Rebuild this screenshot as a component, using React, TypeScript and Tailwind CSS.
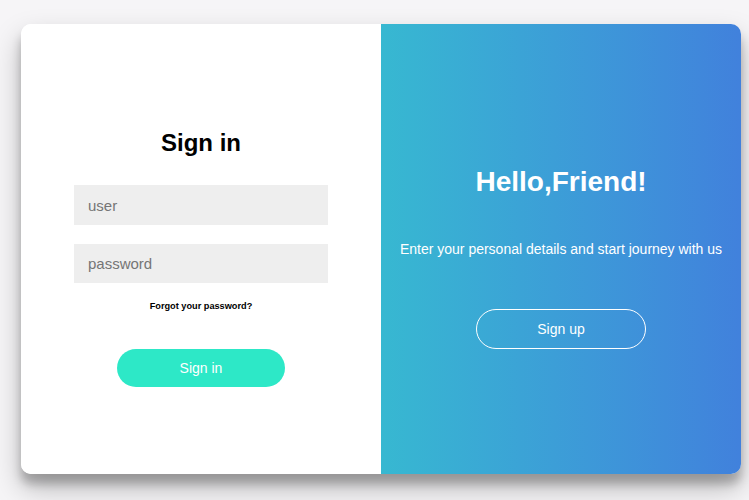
import React from "react";

export default function App() {
  const font = { fontFamily: '"Liberation Sans", Arial, sans-serif' };
  return (
    <div className="w-[749px] h-[500px] bg-[#f6f5f7] pt-[24px] pl-[21px]" style={font}>
      <div className="flex w-[720px] h-[450px] rounded-[10px] overflow-hidden bg-white shadow-[0_14px_28px_rgba(0,0,0,0.25),0_10px_10px_rgba(0,0,0,0.22)]">
        <div className="w-[360px] h-full bg-white flex flex-col items-center pt-[105px]">
          <h1 className="text-[24px] leading-[28px] font-bold text-black">Sign in</h1>
          <input
            className="mt-[28px] w-[254px] h-[40px] bg-[#eeeeee] px-[14px] text-[15px] outline-none placeholder:text-[#757575]"
            placeholder="user"
          />
          <input
            type="password"
            className="mt-[19px] w-[254px] h-[39px] bg-[#eeeeee] px-[14px] text-[15px] outline-none placeholder:text-[#757575]"
            placeholder="password"
          />
          <a className="mt-[17px] text-[9.2px] leading-[12px] font-bold text-black">Forgot your password?</a>
          <button className="mt-[37px] w-[168px] h-[38px] rounded-full bg-[#2de8c7] text-white text-[14px]">
            Sign in
          </button>
        </div>
        <div className="w-[360px] h-full bg-gradient-to-r from-[#37b8d1] to-[#4181dc] flex flex-col items-center pt-[142px] text-white">
          <h1 className="text-[28px] leading-[32px] font-bold">Hello,Friend!</h1>
          <p className="mt-[41px] text-[14px] leading-[20px]">Enter your personal details and start journey with us</p>
          <button className="mt-[50px] w-[170px] h-[40px] rounded-full border border-white text-white text-[14px]">
            Sign up
          </button>
        </div>
      </div>
    </div>
  );
}
